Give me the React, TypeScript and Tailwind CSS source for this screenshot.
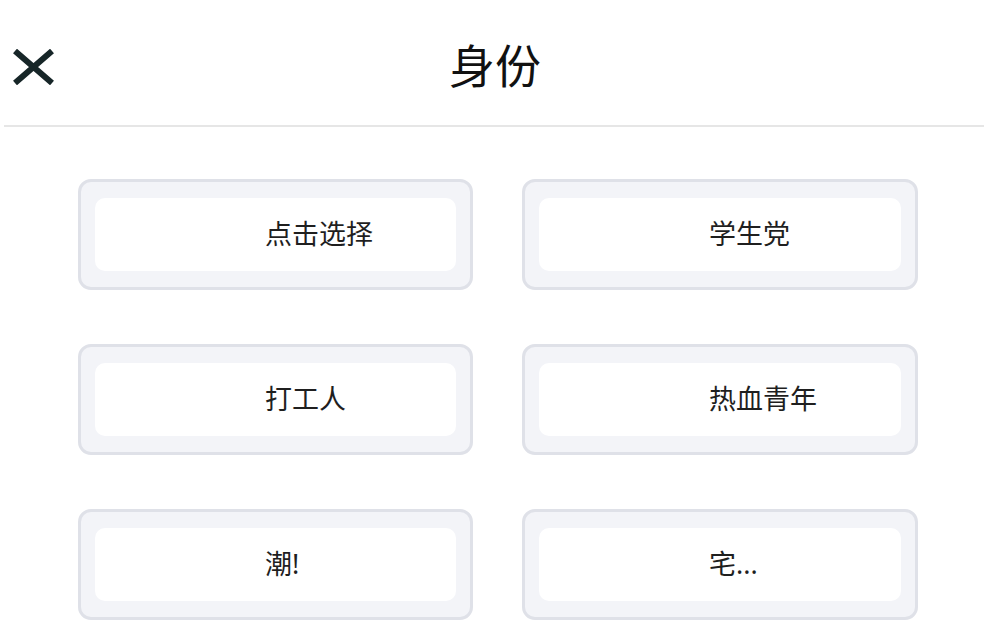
const options = ['点击选择', '学生党', '打工人', '热血青年', '潮!', '宅...'];

export default function App() {
  return (
    <div
      className="w-[984px] h-[627px] overflow-hidden bg-white text-[#1f1f1f]"
      style={{ fontFamily: '"Noto Sans", "Noto Sans CJK SC", sans-serif' }}
    >
      {/* Header */}
      <div className="relative h-[125px] flex items-center justify-center">
        <button className="absolute left-[12px] top-[49px] w-[43px] h-[36px]">
          <svg width="43" height="36" viewBox="0 0 43 36">
            <path d="M3 2 L40 34 M40 2 L3 34" stroke="#172628" strokeWidth="6" strokeLinecap="butt" />
          </svg>
        </button>
        <h1 className="text-[46px] leading-none text-[#111] ml-[6px] mt-[4px]">身份</h1>
      </div>
      <div className="ml-[4px] h-[2px] bg-[#e6e6e6]" />

      {/* Options */}
      <div className="grid grid-cols-[395px_396px] gap-x-[49px] gap-y-[54px] pl-[78px] pt-[52px]">
        {options.map((label) => (
          <div
            key={label}
            className="h-[111px] rounded-[13px] border-[3px] border-[#dfe1e8] bg-[#f3f4f8] px-[14px] py-[16px]"
          >
            <div className="h-full rounded-[10px] bg-white flex items-center pl-[170px] text-[27px] text-[#1f1f1f]">
              {label}
            </div>
          </div>
        ))}
      </div>
    </div>
  );
}
